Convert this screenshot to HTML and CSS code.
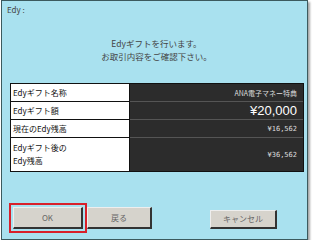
FILE: index.html
```html
<!DOCTYPE html>
<html lang="ja">
<head>
    <meta charset="UTF-8">
    <title>Edy</title>
    <link rel="stylesheet" href="styles.css">
</head>
<body>

<div class="panel">
    <div class="title">Edy :</div>
    <div class="message">
        Edyギフトを行います。<br>
        お取引内容をご確認下さい。
    </div>

    <div class="details">
        <div class="row">
            <div class="label">Edyギフト名称</div>
            <div class="value">ANA電子マネー特典</div>
        </div>
        <div class="row">
            <div class="label">Edyギフト額</div>
            <div class="value big">¥20,000</div>
        </div>
        <div class="row">
            <div class="label">現在のEdy残高</div>
            <div class="value">¥16,562</div>
        </div>
        <div class="row tall">
            <div class="label">Edyギフト後の<br>Edy残高</div>
            <div class="value">¥36,562</div>
        </div>
    </div>

    <div class="actions">
        <div class="focus">
            <button class="btn ok">OK</button>
        </div>
        <button class="btn back">戻る</button>
        <button class="btn cancel">キャンセル</button>
    </div>
</div>

</body>
</html>
```

FILE: styles.css
```css
body {
    margin: 0;
    background-color: #fff;
    font-family: 'Noto Sans CJK JP', 'DejaVu Sans', sans-serif;
}

.panel {
    box-sizing: border-box;
    width: 307px;
    height: 240px;
    margin-left: 1px;
    background-color: #a9e1ef;
    border: 1px solid #3c5a5e;
    box-shadow: 2px 2px 2px rgba(0, 0, 0, 0.35);
    display: flex;
    flex-direction: column;
}

.title {
    font-size: 8px;
    line-height: 11px;
    color: #444;
    padding: 3px 0 0 5px;
}

.message {
    margin-top: 22px;
    text-align: center;
    font-size: 8.5px;
    line-height: 13px;
    color: #444;
    padding-left: 4px;
}

.details {
    margin: 20px 0 0 8px;
    width: 292px;
    border: 1px solid #111;
    background-color: #2c2c2c;
}

.row {
    display: flex;
    height: 17px;
    border-top: 1px solid #555;
}

.row:first-child {
    border-top: none;
}

.row.tall {
    height: 33px;
}

.label {
    width: 116px;
    background-color: #fff;
    color: #111;
    font-size: 8px;
    line-height: 15px;
    padding: 1px 0 0 2px;
    border-right: 1px solid #111;
    box-shadow: 0 -1px 0 #111;
}

.tall .label {
    line-height: 13px;
    padding-top: 3px;
}

.value {
    flex: 1;
    color: #ddd;
    font-size: 7px;
    text-align: right;
    padding-right: 6px;
    display: flex;
    align-items: center;
    justify-content: flex-end;
    font-family: 'DejaVu Sans Mono', 'Noto Sans CJK JP', monospace;
}

.value.big {
    font-size: 13px;
    color: #fff;
    font-family: 'Liberation Sans', 'Noto Sans CJK JP', sans-serif;
}

.row:first-child .value {
    font-family: 'Noto Sans CJK JP', sans-serif;
}

.actions {
    margin-top: auto;
    margin-bottom: 6px;
    display: flex;
    align-items: center;
    padding-left: 7px;
}

.focus {
    border: 2px solid #d8202a;
    padding: 2px;
    display: flex;
}

.btn {
    font-family: 'Noto Sans CJK JP', sans-serif;
    font-size: 8px;
    color: #666;
    background-color: #d6d3cc;
    border: 1px solid #eee;
    border-right: 2px solid #333;
    border-bottom: 2px solid #333;
    padding: 0;
    height: 22px;
}

.ok {
    width: 70px;
}

.back {
    width: 65px;
    margin-left: 0;
}

.cancel {
    width: 67px;
    height: 19px;
    margin-left: 58px;
    margin-top: 2px;
}
```
